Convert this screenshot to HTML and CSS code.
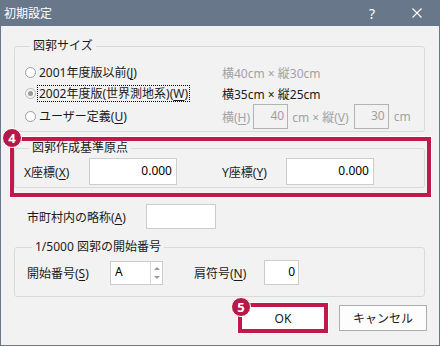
FILE: index.html
```html
<!DOCTYPE html>
<html lang="ja">
<head>
  <meta charset="UTF-8" />
  <meta name="viewport" content="width=device-width, initial-scale=1.0"/>
  <title>初期設定</title>
  <link rel="stylesheet" href="styles.css">
</head>
<body>
  <div class="dialog">
    <div class="titlebar">
      <span class="title">初期設定</span>
      <span class="help">?</span>
      <span class="close">
        <svg width="10" height="10" viewBox="0 0 10 10"><path d="M0.5 0.5L9.5 9.5M9.5 0.5L0.5 9.5" stroke="#fff" stroke-width="1.1" fill="none"/></svg>
      </span>
    </div>

    <div class="content">
      <fieldset class="group size-group">
        <legend>図郭サイズ</legend>
        <div class="size-grid">
          <label class="radio-row"><span class="radio"></span><span class="opt">2001年度版以前(<u>J</u>)</span></label>
          <div class="muted">横40cm × 縦30cm</div>

          <label class="radio-row"><span class="radio checked"></span><span class="opt focus">2002年度版(世界測地系)(<u>W</u>)</span></label>
          <div>横35cm × 縦25cm</div>

          <label class="radio-row"><span class="radio"></span><span class="opt">ユーザー定義(<u>U</u>)</span></label>
          <div class="custom-size muted">
            <span>横(<u>H</u>)</span>
            <input class="field small" type="text" value="40" disabled />
            <span class="unit">cm × 縦(<u>V</u>)</span>
            <input class="field small second" type="text" value="30" disabled />
            <span class="unit last">cm</span>
          </div>
        </div>
      </fieldset>

      <div class="highlight">
        <span class="badge badge-4">4</span>
        <fieldset class="group origin-group">
          <legend>図郭作成基準原点</legend>
          <div class="coord-row">
            <label class="coord-label">X座標(<u>X</u>)</label>
            <input class="field coord" type="text" value="0.000" />
            <label class="coord-label y-label">Y座標(<u>Y</u>)</label>
            <input class="field coord" type="text" value="0.000" />
          </div>
        </fieldset>
      </div>

      <div class="name-row">
        <label class="name-label">市町村内の略称(<u>A</u>)</label>
        <input class="field name" type="text" value="" />
      </div>

      <fieldset class="group start-group">
        <legend>1/5000 図郭の開始番号</legend>
        <div class="start-row">
          <label class="start-label">開始番号(<u>S</u>)</label>
          <div class="spin">
            <input type="text" value="A" />
            <div class="spin-btns">
              <span class="arrow up"></span>
              <span class="arrow down"></span>
            </div>
          </div>
          <label class="sign-label">肩符号(<u>N</u>)</label>
          <input class="field small sign" type="text" value="0" />
        </div>
      </fieldset>

      <div class="buttons">
        <div class="ok-wrap">
          <span class="badge badge-5">5</span>
          <button class="btn ok" type="button">OK</button>
        </div>
        <button class="btn" type="button">キャンセル</button>
      </div>
    </div>
  </div>
</body>
</html>
```

FILE: styles.css
```css
body {
  margin: 0;
  font-family: "Noto Sans", "Noto Sans CJK JP", sans-serif;
  font-size: 12px;
  color: #1a1a1a;
  background: #ffffff;
}

u {
  text-underline-offset: 2px;
}

.dialog {
  width: 440px;
  height: 346px;
  box-sizing: border-box;
  border: 1px solid #687789;
  border-top: 0;
  background: #f2f2f2;
}

.titlebar {
  height: 26px;
  background: #687789;
  color: #ffffff;
  display: flex;
  align-items: center;
  padding-left: 3px;
}

.title {
  font-size: 12px;
}

.help {
  margin-left: auto;
  font-size: 14px;
  width: 8px;
}

.close {
  display: flex;
  margin-left: 35px;
  margin-right: 17px;
}

.content {
  padding: 12px 14px 0 13px;
}

.group {
  margin: 0;
  min-width: 0;
  border: 1px solid #d9d9d9;
  border-radius: 3px;
}

.group legend {
  padding: 0 3px;
  margin-left: 5px;
  line-height: 16px;
}

/* 図郭サイズ */
.size-group {
  padding: 8px 0 2px 10px;
}

.size-grid {
  display: grid;
  grid-template-columns: 197px auto;
  grid-template-rows: 21px 21px 25px;
  align-items: center;
}

.radio-row {
  display: flex;
  align-items: center;
}

.radio {
  width: 11px;
  height: 11px;
  box-sizing: border-box;
  border: 1px solid #9c9c9c;
  border-radius: 50%;
  background: #ffffff;
  margin-right: 1px;
  position: relative;
}

.radio.checked {
  border-color: #b8b8b8;
  background: #f4f4f4;
}

.radio.checked::after {
  content: "";
  position: absolute;
  left: 2px;
  top: 2px;
  width: 5px;
  height: 5px;
  border-radius: 50%;
  background: #9a9a9a;
}

.opt {
  border: 1px dotted transparent;
  padding: 0 1px;
  line-height: 15px;
}

.opt.focus {
  border-color: #000000;
}

.muted {
  color: #a3a3a3;
}

.custom-size {
  display: flex;
  align-items: center;
}

.field {
  box-sizing: border-box;
  height: 25px;
  margin: 0;
  border: 1px solid #cccccc;
  background: #ffffff;
  font-family: inherit;
  font-size: 12px;
  color: #000000;
  text-align: right;
  padding: 0 4px 2px;
  outline: none;
}

.field.small {
  width: 35px;
  padding-right: 3px;
}

.field:disabled {
  background: #f2f2f2;
  border-color: #b3b3b3;
  color: #a0a0a0;
}

.custom-size .field {
  margin-left: 3px;
}

.custom-size .unit {
  margin-left: 4px;
}

.custom-size .field.second {
  margin-left: 5px;
}

.custom-size .unit.last {
  margin-left: 5px;
}

/* 図郭作成基準原点 */
.highlight {
  position: relative;
  margin: 5px -6px 0 -4px;
  border: 4px solid #c01a4a;
  padding: 0 2px 5px 0;
  box-shadow: 0 0 0 1px #ffffff;
}

.origin-group {
  padding: 3px 0 2px 9px;
}

.origin-group legend {
  line-height: 14px;
}

.coord-row {
  display: flex;
  align-items: center;
}

.coord-label {
  width: 65px;
}

.coord-label.y-label {
  width: 64px;
  margin-left: 45px;
}

.field.coord {
  width: 88px;
  height: 27px;
}

.badge {
  position: absolute;
  width: 18px;
  height: 18px;
  border: 1px solid #ffffff;
  border-radius: 50%;
  background: #b9174a;
  color: #ffffff;
  font-family: "Noto Sans", sans-serif;
  font-weight: bold;
  font-size: 13px;
  line-height: 18px;
  text-align: center;
  z-index: 2;
}

.badge-4 {
  left: -12px;
  top: -13px;
}

/* 市町村内の略称 */
.name-row {
  display: flex;
  align-items: center;
  margin-top: 7px;
  padding-left: 13px;
}

.name-label {
  width: 119px;
}

.field.name {
  width: 70px;
}

/* 開始番号 */
.start-group {
  margin-top: 10px;
  padding: 5px 0 11px 12px;
}

.start-row {
  display: flex;
  align-items: center;
  height: 25px;
}

.start-label {
  width: 83px;
}

.spin {
  display: flex;
  width: 53px;
  height: 24px;
  box-sizing: border-box;
  border: 1px solid #cccccc;
  background: #ffffff;
}

.spin input {
  width: 35px;
  border: 0;
  margin: 0;
  padding: 0 0 3px 4px;
  font-family: inherit;
  font-size: 12px;
  color: #000000;
  outline: none;
  background: transparent;
}

.spin-btns {
  flex: 1;
  border-left: 1px solid #dadada;
  display: flex;
  flex-direction: column;
  align-items: center;
  justify-content: space-between;
  padding: 5px 0;
}

.arrow {
  width: 0;
  height: 0;
  border-left: 3px solid transparent;
  border-right: 3px solid transparent;
}

.arrow.up {
  border-bottom: 3px solid #9a9a9a;
}

.arrow.down {
  border-top: 3px solid #9a9a9a;
}

.sign-label {
  width: 70px;
  margin-left: 31px;
}

/* ボタン */
.buttons {
  display: flex;
  justify-content: flex-end;
  align-items: center;
  gap: 11px;
  margin-top: 6px;
  margin-right: -2px;
}

.ok-wrap {
  position: relative;
}

.btn {
  box-sizing: border-box;
  width: 88px;
  height: 26px;
  margin: 0;
  border: 1px solid #adadad;
  background: #fdfdfd;
  font-family: inherit;
  font-size: 12px;
  color: #1a1a1a;
  padding: 0;
}

.btn.ok {
  display: block;
  width: 90px;
  height: 30px;
  border: 4px solid #c01a4a;
  background: #ffffff;
  box-shadow: 0 0 0 1px #ffffff;
}

.badge-5 {
  left: -7px;
  top: -6px;
}
```
